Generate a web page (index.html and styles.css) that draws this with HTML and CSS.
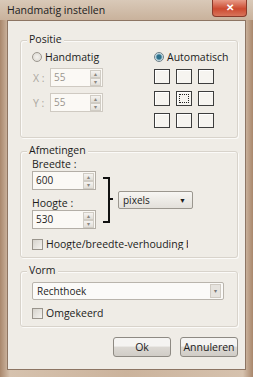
FILE: index.html
```html
<!DOCTYPE html>
<html lang="nl">
<head>
    <meta charset="UTF-8">
    <meta name="viewport" content="width=device-width, initial-scale=1.0">
    <title>Handmatig instellen</title>
    <link rel="stylesheet" href="styles.css">
</head>
<body>
    <div class="window">
        <div class="titlebar">
            <span class="title">Handmatig instellen</span>
            <div class="close">&#x2715;</div>
        </div>
        <div class="client">
            <div class="group positie">
                <span class="legend">Positie</span>
                <div class="pos-left">
                    <label class="radio-row"><span class="radio"></span>Handmatig</label>
                    <div class="coord">
                        <span class="coord-label">X :</span>
                        <div class="spin disabled"><span class="val">55</span><span class="arrows"><i>&#9652;</i><i>&#9662;</i></span></div>
                    </div>
                    <div class="coord">
                        <span class="coord-label">Y :</span>
                        <div class="spin disabled"><span class="val">55</span><span class="arrows"><i>&#9652;</i><i>&#9662;</i></span></div>
                    </div>
                </div>
                <div class="pos-right">
                    <label class="radio-row"><span class="radio checked"></span>Automatisch</label>
                    <div class="anchors">
                        <span class="cell"></span><span class="cell"></span><span class="cell"></span>
                        <span class="cell"></span><span class="cell active"></span><span class="cell"></span>
                        <span class="cell"></span><span class="cell"></span><span class="cell"></span>
                    </div>
                </div>
            </div>

            <div class="group afmetingen">
                <span class="legend">Afmetingen</span>
                <div class="size-row">
                    <div class="size-fields">
                        <div class="field-label">Breedte :</div>
                        <div class="spin wide"><span class="val">600</span><span class="arrows"><i>&#9652;</i><i>&#9662;</i></span></div>
                        <div class="field-label second">Hoogte :</div>
                        <div class="spin wide"><span class="val">530</span><span class="arrows"><i>&#9652;</i><i>&#9662;</i></span></div>
                    </div>
                    <div class="bracket"></div>
                    <div class="select small">pixels<span class="caret">&#9660;</span></div>
                </div>
                <label class="check-row clip"><span class="checkbox"></span>Hoogte/breedte-verhouding behouden</label>
            </div>

            <div class="group vorm">
                <span class="legend">Vorm</span>
                <div class="select combo">Rechthoek<span class="drop">&#9662;</span></div>
                <label class="check-row"><span class="checkbox"></span>Omgekeerd</label>
            </div>

            <div class="buttons">
                <button class="btn">Ok</button>
                <button class="btn">Annuleren</button>
            </div>
        </div>
    </div>
</body>
</html>
```

FILE: styles.css
```css
body {
    margin: 0;
    padding: 0;
    font-family: 'Open Sans', 'Noto Sans', sans-serif;
    font-size: 10px;
    color: #1c1c1c;
    background: #b8987c;
}
.window {
    width: 253px;
    height: 377px;
    display: flex;
    flex-direction: column;
    background: linear-gradient(90deg, #a9876c, #d6c2ae 4%, #cbb39c 50%, #d6c2ae 96%, #a9876c);
}
.titlebar {
    height: 20px;
    display: flex;
    align-items: flex-start;
    justify-content: space-between;
    padding-left: 7px;
    background: linear-gradient(180deg, #d9c9b8, #c9b29c);
}
.title {
    font-size: 10.5px;
    line-height: 20px;
    color: #202020;
}
.close {
    width: 33px;
    height: 16px;
    margin-right: 6px;
    border: 1px solid #8a3a2a;
    border-top: none;
    border-radius: 0 0 4px 4px;
    background: linear-gradient(180deg, #e79a86, #cc4a30 55%, #d8745a);
    color: #fff;
    font-size: 10px;
    font-weight: bold;
    text-align: center;
    line-height: 15px;
}
.client {
    height: 350px;
    box-sizing: border-box;
    margin: 0 7px;
    padding: 19px 8px 0 12px;
    background: #efece6;
    border: 1px solid #8d7563;
    display: flex;
    flex-direction: column;
}
.group {
    position: relative;
    box-sizing: border-box;
    flex: none;
    width: 218px;
    border: 1px solid #d8d3cb;
    border-radius: 3px;
    box-shadow: inset 1px 1px 0 #fbfaf8, 1px 1px 0 #fbfaf8;
    padding-left: 11px;
}
.legend {
    position: absolute;
    top: -9px;
    left: 6px;
    padding: 0 2px;
    background: #efece6;
    font-size: 10.5px;
    line-height: 15px;
}
.positie {
    height: 98px;
    display: flex;
    padding-top: 10px;
}
.pos-left {
    width: 122px;
}
.radio-row {
    display: flex;
    align-items: center;
    height: 12px;
    font-size: 10.5px;
}
.radio {
    width: 10px;
    height: 10px;
    border: 1px solid #9c978f;
    border-radius: 50%;
    background: radial-gradient(circle, #f4f2ee, #d9d6d0);
    margin-right: 3px;
    box-sizing: border-box;
}
.radio.checked {
    background: radial-gradient(circle, #2c6f8a 0 2px, #8fb9c9 3px, #e9eef0 4px);
    border-color: #6c7f88;
}
.coord {
    display: flex;
    align-items: center;
    margin-top: 5px;
}
.coord + .coord {
    margin-top: 6px;
}
.coord-label {
    width: 17px;
    padding-left: 1px;
    color: #aba79f;
    font-size: 10.5px;
}
.spin {
    height: 19px;
    box-sizing: border-box;
    border: 1px solid #b3aea6;
    background: #fbf9f5;
    display: flex;
    justify-content: space-between;
    align-items: stretch;
}
.spin.disabled {
    width: 53px;
    border-color: #cfcac2;
    color: #9a968f;
}
.spin.wide {
    width: 64px;
}
.val {
    padding-left: 3px;
    line-height: 17px;
    font-size: 10px;
}
.arrows {
    width: 11px;
    display: flex;
    flex-direction: column;
    margin: 1px;
}
.arrows i {
    flex: 1;
    font-style: normal;
    font-size: 6px;
    line-height: 6px;
    text-align: center;
    color: #8a8680;
    background: linear-gradient(180deg, #f5f3f0, #e1ded8);
    border: 1px solid #d0ccc4;
}
.pos-right {
    display: flex;
    flex-direction: column;
}
.anchors {
    margin-top: 6px;
    display: grid;
    grid-template-columns: repeat(3, 16px);
    grid-auto-rows: 15px;
    column-gap: 6px;
    row-gap: 7px;
}
.cell {
    border: 1px solid #3d3d3d;
    background: #f6f4f0;
    box-shadow: inset 1px 1px 0 #fff;
}
.cell.active {
    outline: 1px dotted #222;
    outline-offset: -4px;
}
.afmetingen {
    margin-top: 13px;
    height: 107px;
    padding-top: 7px;
}
.size-row {
    display: flex;
    align-items: flex-start;
}
.field-label {
    font-size: 10.5px;
    line-height: 11px;
    margin-bottom: 1px;
}
.field-label.second {
    margin-top: 8px;
}
.bracket {
    width: 5px;
    height: 42px;
    margin: 18px 0 0 7px;
    border: 2px solid #111;
    border-left: none;
    position: relative;
}
.bracket::after {
    content: "";
    position: absolute;
    left: 5px;
    top: 19px;
    width: 5px;
    height: 2px;
    background: #111;
}
.select {
    box-sizing: border-box;
    border: 1px solid #9b978f;
    border-radius: 2px;
    display: flex;
    align-items: center;
    justify-content: space-between;
    font-size: 10px;
}
.select.small {
    width: 75px;
    height: 18px;
    margin: 32px 0 0 8px;
    padding: 0 6px 0 4px;
    background: linear-gradient(180deg, #f7f6f3, #e3e0da);
}
.caret {
    font-size: 7px;
}
.check-row {
    display: flex;
    align-items: center;
    font-size: 10.5px;
    height: 12px;
    margin-top: 9px;
    white-space: nowrap;
}
.check-row.clip {
    width: 156px;
    overflow: hidden;
}
.checkbox {
    flex: none;
    width: 11px;
    height: 11px;
    box-sizing: border-box;
    border: 1px solid #99948c;
    background: linear-gradient(135deg, #d6d3cd, #f4f2ee);
    margin-right: 3px;
}
.vorm {
    margin-top: 13px;
    height: 56px;
    padding-top: 10px;
}
.select.combo {
    width: 192px;
    height: 18px;
    padding: 0 2px 0 4px;
    background: #fbfaf8;
    border-color: #b9b4ac;
}
.drop {
    width: 9px;
    height: 12px;
    font-size: 6px;
    line-height: 12px;
    text-align: center;
    color: #777;
    background: #e6e3de;
    border: 1px solid #cfcac2;
}
.vorm .check-row {
    margin-top: 7px;
}
.buttons {
    display: flex;
    justify-content: flex-end;
    gap: 9px;
    width: 218px;
    margin-top: 10px;
}
.btn {
    width: 58px;
    height: 20px;
    padding: 0;
    font-family: inherit;
    font-size: 10.5px;
    color: #1c1c1c;
    border: 1px solid #8e8a83;
    border-radius: 3px;
    background: linear-gradient(180deg, #f5f4f2 45%, #dcd9d4 50%, #d0ccc6);
}
```
